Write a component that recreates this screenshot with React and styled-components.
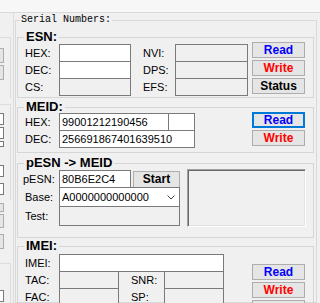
import React from "react";
import styled, { createGlobalStyle } from "styled-components";

const Global = createGlobalStyle`
  html, body { margin: 0; padding: 0; }
  body {
    background: #f0f0f0;
    font-family: "Liberation Sans", Arial, sans-serif;
    overflow: hidden;
  }
`;

const Screen = styled.div`
  width: 320px;
  height: 303px;
  overflow: hidden;
  background: #f0f0f0;
  display: flex;
  flex-direction: column;
`;

const TopStrip = styled.div`
  flex: none;
  height: 12px;
  background: #f7f7f7;
  border-bottom: 1px solid #d9d9d9;
`;

const Body = styled.div`
  flex: 1;
  display: flex;
  min-height: 0;
`;

const SideStrip = styled.div`
  flex: none;
  width: 13px;
  border-right: 1px solid #dcdcdc;
  display: flex;
  flex-direction: column;
`;

const SideGroup = styled.div`
  flex: none;
  box-sizing: border-box;
  width: 11px;
  height: ${(p) => p.$h}px;
  margin-top: ${(p) => p.$top}px;
  border-top: 1px solid #dcdcdc;
  border-right: 1px solid #dcdcdc;
  display: flex;
  flex-direction: column;
`;

const SideBox = styled.div`
  flex: none;
  box-sizing: border-box;
  width: 4px;
  height: ${(p) => p.$h || 15}px;
  margin-top: ${(p) => p.$top || 0}px;
  border: 1px solid ${(p) => (p.$dark ? "#7a7a7a" : "#adadad")};
  border-left: none;
  background: ${(p) => (p.$white ? "#fff" : "#e5e5e5")};
`;

const Group = styled.fieldset`
  margin: ${(p) => p.$top || 0}px 0 0 0;
  min-width: 0;
  padding: ${(p) => p.$pt || 0}px 8px ${(p) => p.$pb || 0}px 7px;
  border: 1px solid #d5d5d5;
`;

const Outer = styled(Group)`
  flex: none;
  width: 302px;
  box-sizing: border-box;
  margin: 1px 0 0 1px;
  padding: 5px 2px 0 1px;
  border-color: #d9d9d9;
`;

const Title = styled.legend`
  margin-left: 3px;
  padding: 0 1px;
  font: 10px/12px "Liberation Mono", "Courier New", monospace;
  color: #000;
`;

const Legend = styled.legend`
  padding: 0 2px;
  margin-left: -1px;
  font: bold 13px/12px "Liberation Sans", Arial, sans-serif;
  color: #000;
`;

const GroupBody = styled.div`
  display: flex;
  align-items: flex-start;
`;

const Column = styled.div`
  display: flex;
  flex-direction: column;
  flex: none;
  padding-top: ${(p) => p.$pt || 0}px;
`;

const Row = styled.div`
  display: flex;
  align-items: center;
  height: ${(p) => p.$h || 18}px;
  & + & {
    margin-top: ${(p) => (p.$flush ? 0 : -1)}px;
  }
`;

const Label = styled.span`
  flex: none;
  box-sizing: border-box;
  width: ${(p) => p.$w || 34}px;
  padding-left: ${(p) => p.$pad || 0}px;
  margin-left: ${(p) => p.$shift || 0}px;
  font-size: 11px;
  color: #000;
  white-space: nowrap;
`;

const Field = styled.div`
  flex: none;
  box-sizing: border-box;
  width: ${(p) => p.$w}px;
  height: ${(p) => p.$h || 18}px;
  margin-left: ${(p) => p.$ml || 0}px;
  border: 1px solid #7a7a7a;
  background: ${(p) => (p.$off ? "#f0f0f0" : "#fff")};
  padding-left: 2px;
  font-size: 11px;
  line-height: 16px;
  color: #000;
  white-space: nowrap;
  overflow: hidden;
`;

const Combo = styled(Field)`
  display: flex;
  align-items: center;
  justify-content: space-between;
  padding-right: 4px;
  line-height: 18px;
`;

const Buttons = styled.div`
  flex: none;
  display: flex;
  flex-direction: column;
  gap: 2px;
  margin-left: auto;
  margin-top: ${(p) => p.$top || 0}px;
`;

const Btn = styled.button`
  box-sizing: border-box;
  flex: none;
  width: ${(p) => p.$w || 53}px;
  height: ${(p) => p.$h || 16}px;
  margin: 0 0 0 ${(p) => p.$ml || 0}px;
  padding: 0;
  border: ${(p) => (p.$focus ? "2px solid #0078d7" : "1px solid #adadad")};
  background: #e5e5e5;
  font: bold 12px/13px "Liberation Sans", Arial, sans-serif;
  color: ${(p) => p.$color || "#000"};
  cursor: default;
`;

const Sunken = styled.div`
  flex: none;
  box-sizing: border-box;
  width: 119px;
  height: 58px;
  margin-left: 7px;
  border: 1px solid;
  border-color: #a0a0a0 #fff #fff #a0a0a0;
  box-shadow: inset 1px 1px 0 #696969, inset -1px -1px 0 #e3e3e3;
  background: #f0f0f0;
`;

const Chevron = () => (
  <svg width="8" height="5" viewBox="0 0 8 5">
    <polyline points="0.5,0.5 4,4 7.5,0.5" fill="none" stroke="#444" strokeWidth="1" />
  </svg>
);

function Side() {
  return (
    <SideStrip>
      <SideGroup $top={24} $h={61}>
        <SideBox $top={10} />
        <SideBox $top={2} />
      </SideGroup>
      <SideGroup $top={6} $h={96}>
        <SideBox $top={8} $h={12} $white $dark />
        <SideBox $top={2} $h={12} $white $dark />
        <SideBox $top={2} $h={6} $white $dark />
        <SideBox $top={18} $h={12} $white $dark />
        <SideBox $top={6} $h={12} $white $dark />
        <SideBox $top={8} $h={9} />
      </SideGroup>
      <SideBox $top={14} $h={14} />
      <SideBox $top={6} $h={15} />
      <SideGroup $top={14} $h={40}>
        <SideBox $top={26} $h={12} $white $dark />
      </SideGroup>
    </SideStrip>
  );
}

export default function App() {
  return (
    <Screen>
      <Global />
      <TopStrip />
      <Body>
        <Side />
        <Outer>
          <Title>Serial Numbers:</Title>

          <Group $pt={1} $pb={1}>
            <Legend>ESN:</Legend>
            <GroupBody>
              <Column>
                <Row><Label>HEX:</Label><Field $w={72} /></Row>
                <Row><Label>DEC:</Label><Field $w={72} /></Row>
                <Row><Label>CS:</Label><Field $w={72} $off /></Row>
              </Column>
              <Column>
                <Row><Label $w={44} $pad={12}>NVI:</Label><Field $w={73} $off /></Row>
                <Row><Label $w={44} $pad={12}>DPS:</Label><Field $w={73} $off /></Row>
                <Row><Label $w={44} $pad={12}>EFS:</Label><Field $w={73} $off /></Row>
              </Column>
              <Buttons $top={-2}>
                <Btn $color="#0000ff">Read</Btn>
                <Btn $color="#ff0000">Write</Btn>
                <Btn>Status</Btn>
              </Buttons>
            </GroupBody>
          </Group>

          <Group $top={3} $pb={4}>
            <Legend>MEID:</Legend>
            <GroupBody>
              <Column>
                <Row>
                  <Label>HEX:</Label>
                  <Field $w={110}>99001212190456</Field>
                  <Field $w={27} $ml={-1} />
                </Row>
                <Row>
                  <Label>DEC:</Label>
                  <Field $w={136}>256691867401639510</Field>
                </Row>
              </Column>
              <Buttons $top={-1}>
                <Btn $color="#0000ff" $focus>Read</Btn>
                <Btn $color="#ff0000">Write</Btn>
              </Buttons>
            </GroupBody>
          </Group>

          <Group $top={4} $pb={10}>
            <Legend>pESN -&gt; MEID</Legend>
            <GroupBody>
              <Column $pt={1}>
                <Row>
                  <Label $shift={-2} $w={36}>pESN:</Label>
                  <Field $w={72}>80B6E2C4</Field>
                  <Btn $w={47} $h={17} $ml={2}>Start</Btn>
                </Row>
                <Row $h={20} $flush>
                  <Label>Base:</Label>
                  <Combo $w={121} $h={20}>
                    A0000000000000
                    <Chevron />
                  </Combo>
                </Row>
                <Row $h={20}>
                  <Label>Test:</Label>
                  <Field $w={121} $h={20} $off />
                </Row>
              </Column>
              <Sunken />
            </GroupBody>
          </Group>

          <Group $top={2} $pt={2}>
            <Legend>IMEI:</Legend>
            <GroupBody>
              <Column>
                <Row><Label>IMEI:</Label><Field $w={165} /></Row>
                <Row>
                  <Label>TAC:</Label>
                  <Field $w={60} $off />
                  <Label $w={45} $pad={12}>SNR:</Label>
                  <Field $w={60} $off />
                </Row>
                <Row>
                  <Label>FAC:</Label>
                  <Field $w={60} $off />
                  <Label $w={45} $pad={12}>SP:</Label>
                  <Field $w={60} $off />
                </Row>
              </Column>
              <Buttons $top={10}>
                <Btn $color="#0000ff">Read</Btn>
                <Btn $color="#ff0000">Write</Btn>
                <Btn aria-label="more" />
              </Buttons>
            </GroupBody>
          </Group>
        </Outer>
      </Body>
    </Screen>
  );
}
